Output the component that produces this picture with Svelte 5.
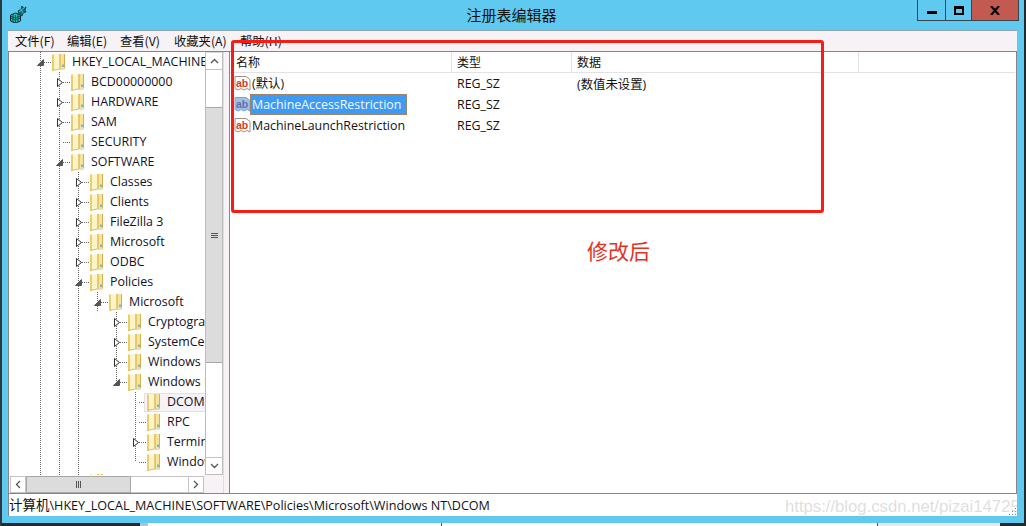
<script>
  const menus = ['文件(F)', '编辑(E)', '查看(V)', '收藏夹(A)', '帮助(H)'];
  const tree = [
    { d: 0, t: 'HKEY_LOCAL_MACHINE', e: 'o' },
    { d: 1, t: 'BCD00000000', e: 'c' },
    { d: 1, t: 'HARDWARE', e: 'c' },
    { d: 1, t: 'SAM', e: 'c' },
    { d: 1, t: 'SECURITY', e: '' },
    { d: 1, t: 'SOFTWARE', e: 'o' },
    { d: 2, t: 'Classes', e: 'c' },
    { d: 2, t: 'Clients', e: 'c' },
    { d: 2, t: 'FileZilla 3', e: 'c' },
    { d: 2, t: 'Microsoft', e: 'c' },
    { d: 2, t: 'ODBC', e: 'c' },
    { d: 2, t: 'Policies', e: 'o' },
    { d: 3, t: 'Microsoft', e: 'o' },
    { d: 4, t: 'Cryptography', e: 'c' },
    { d: 4, t: 'SystemCertificates', e: 'c' },
    { d: 4, t: 'Windows', e: 'c' },
    { d: 4, t: 'Windows NT', e: 'o' },
    { d: 5, t: 'DCOM', e: '', sel: true },
    { d: 5, t: 'RPC', e: '' },
    { d: 5, t: 'Terminal Services', e: 'c' },
    { d: 5, t: 'Windows', e: '' },
    { d: 2, t: '', e: '' }
  ];
  const values = [
    { n: '(默认)', t: 'REG_SZ', v: '(数值未设置)' },
    { n: 'MachineAccessRestriction', t: 'REG_SZ', v: '', sel: true },
    { n: 'MachineLaunchRestriction', t: 'REG_SZ', v: '' }
  ];
  const guides = [
    [31, 0, 423], [50, 20, 403], [69, 120, 303], [88, 240, 20], [107, 260, 70], [126, 340, 70]
  ];
  const lineX = (d) => 31 + 19 * d;
  const rowY = (i) => 10 + 20 * i;
</script>

<div class="window">
  <header class="titlebar">
    <svg class="appicon" viewBox="0 0 18 18" width="18" height="18">
      <path d="M.5 10l5-2 5 2v6l-5 2-5-2z" fill="#22c4bd" stroke="#06222a" stroke-width="1"/>
      <path d="M.5 13l5 2 5-2M5.500 10v8M3 9v8M8 9v8M.5 11l5 2 5-2" fill="none" stroke="#06222a" stroke-width=".7"/>
      <path d="M8 6l3-2 1-3 2 2 2-1-1 3 1 2-3 1-1 3-3-2z" fill="#0e6f80" stroke="#06222a" stroke-width=".7"/>
      <path d="M10 3l3 5M15 2l-6 5" stroke="#39c6cf" stroke-width="1"/>
    </svg>
    <div class="title">注册表编辑器</div>
    <div class="caption">
      <div class="cbtn min"><i></i></div>
      <div class="cbtn max"><i></i></div>
      <div class="cbtn close">
        <svg viewBox="0 0 10 9" width="10" height="9"><path d="M1 0l8 9M9 0l-8 9" fill="none" stroke="#000" stroke-width="2.200"/></svg>
      </div>
    </div>
  </header>

  <div class="client">
    <nav class="menubar">
      {#each menus as m}<span>{m}</span>{/each}
    </nav>
    <div class="panes">
      <section class="treepane">
        <div class="treeview">
          <svg class="lines" width="196" height="423">
            {#each guides as g}
              <line x1={g[0] + .5} x2={g[0] + .5} y1={g[1]} y2={g[1] + g[2]} />
            {/each}
            {#each tree as r, i}
              {#if r.t}<line x1={lineX(r.d) + 4} x2={lineX(r.d) + 12} y1={rowY(i) + .5} y2={rowY(i) + .5} />{/if}
            {/each}
          </svg>
          {#each tree as r}
            <div class="node" style="padding-left:{lineX(r.d) + 12}px">
              <span class="exp">
                {#if r.e === 'o'}
                  <svg width="7" height="7" viewBox="0 0 7 7"><path d="M6.500.5v6h-6z" fill="#555" stroke="#555"/></svg>
                {:else if r.e === 'c'}
                  <svg width="6" height="9" viewBox="0 0 6 9"><path d="M.5.5l5 4-5 4z" fill="#fff" stroke="#333"/></svg>
                {/if}
              </span>
              <div class="item" class:sel={r.sel}>
                <svg class="folder" viewBox="0 0 15 18" width="15" height="18">
                  <path d="M8 1h5.500v14H8z" fill="#f7e39a"/>
                  <path d="M13 1h1v14h-1z" fill="#d4b052"/>
                  <path d="M1 1.500h7.500V16L1 17.500z" fill="#fdf4c8"/>
                  <path d="M1 1.500h2v16H1z" fill="#eccd6e"/>
                  <path d="M8.500 1h1v15h-1z" fill="#cfa945"/>
                  <path d="M12 11.500v2.500" stroke="#3a9ad0" stroke-width="1.200"/>
                  <path d="M1 17.500l7.500-1.500h5v-.5" fill="none" stroke="#d9bd63"/>
                </svg>
                {#if r.t}<span class="label">{r.t}</span>{/if}
              </div>
            </div>
          {/each}
        </div>
        <div class="vscroll">
          <div class="sbtn">
            <svg width="9" height="6" viewBox="0 0 9 6"><path d="M1 5l3.500-3.500L8 5" fill="none" stroke="#555" stroke-width="1.300"/></svg>
          </div>
          <div class="vtrack">
            <div class="vthumb"><b></b><b></b><b></b></div>
          </div>
          <div class="sbtn">
            <svg width="9" height="6" viewBox="0 0 9 6"><path d="M1 1l3.500 3.500L8 1" fill="none" stroke="#555" stroke-width="1.300"/></svg>
          </div>
        </div>
        <div class="hscroll">
          <div class="sbtn h">
            <svg width="6" height="9" viewBox="0 0 6 9"><path d="M5 1L1.500 4.500 5 8" fill="none" stroke="#555" stroke-width="1.300"/></svg>
          </div>
          <div class="hthumb"><b></b><b></b><b></b></div>
          <div class="htrack"></div>
          <div class="sbtn h">
            <svg width="6" height="9" viewBox="0 0 6 9"><path d="M1 1l3.500 3.500L1 8" fill="none" stroke="#555" stroke-width="1.300"/></svg>
          </div>
        </div>
        <div class="corner"></div>
      </section>
      <section class="listpane">
        <div class="heads">
          <div class="head c1">名称</div>
          <div class="head c2">类型</div>
          <div class="head c3">数据</div>
        </div>
        {#each values as v}
          <div class="vrow">
            <div class="c1 namecell">
              <svg class="abicon" class:dim={v.sel} viewBox="0 0 17 17" width="17" height="17">
                <path class="paper" d="M1 1.500h11l4 3v10.500l-3-1.500-3 1.500-3-1.500-3 1.500-3-1.500z"/>
                <text x="2" y="11.500" class="ab">ab</text>
              </svg>
              <span class="vname" class:on={v.sel}>{v.n}</span>
            </div>
            <div class="c2 cell">{v.t}</div>
            <div class="c3 cell">{v.v}</div>
          </div>
        {/each}
      </section>
    </div>
    <footer class="status">
      <span class="root">计算机</span><span>\HKEY_LOCAL_MACHINE\SOFTWARE\Policies\Microsoft\Windows NT\DCOM</span>
      <svg class="grip" width="10" height="10" viewBox="0 0 10 10"><path d="M8 2h1v1H8zM8 5h1v1H8zM5 5h1v1H5zM8 8h1v1H8zM5 8h1v1H5zM2 8h1v1H2z" fill="#777"/></svg>
    </footer>
  </div>

  <div class="behind">
    <i class="b1"></i><i class="b2"></i><i class="b3"></i><i class="b4"></i><i class="b5"></i>
  </div>

  <div class="redbox"></div>
  <div class="note">修改后</div>
  <div class="mark">https://blog.csdn.net/pizai147258</div>
</div>

<style>
  :global(body) { margin: 0; background: #222; }
  .window {
    position: relative;
    width: 1026px; height: 526px; box-sizing: border-box; overflow: hidden;
    background: #5fc9f0;
    border-left: 2px solid #2b3a42; border-right: 2px solid #26282a;
    font-family: "Open Sans", "Noto Sans CJK SC", sans-serif; font-size: 12.4px; color: #111;
    display: flex; flex-direction: column;
  }
  .titlebar { height: 30px; flex: none; position: relative; display: flex; justify-content: center; }
  .appicon { position: absolute; left: 8px; top: 5px; }
  .title { font-family: "Noto Sans CJK SC", sans-serif; font-size: 15px; line-height: 30px; color: #111; padding-right: 3px; }
  .caption { position: absolute; top: 0; right: 5px; display: flex; height: 21px; border: solid #38454d; border-width: 0 1px 1px 1px; box-sizing: border-box; }
  .cbtn { display: flex; align-items: center; justify-content: center; height: 20px; }
  .min { width: 27px; border-right: 1px solid #38454d; }
  .min i { width: 10px; height: 3px; background: #000; margin-top: 4px; }
  .max { width: 25px; border-right: 1px solid #38454d; }
  .max i { width: 6px; height: 4px; border: 2px solid #000; border-top-width: 3px; }
  .close { width: 46px; background: #c35a52; }
  .client { margin: 0 7px 7px 6px; flex: 1; min-height: 0; display: flex; flex-direction: column; background: #f6f2f6; }
  .menubar { flex: none; display: flex; padding-left: 7px; line-height: 20px; font-size: 12.300px; border-top: 1px solid #8fa3ad; height: 20px; font-family: "Noto Sans CJK SC", sans-serif; }
  .menubar span:nth-child(1) { width: 52px; }
  .menubar span:nth-child(2) { width: 53px; }
  .menubar span:nth-child(3) { width: 54px; }
  .menubar span:nth-child(4) { width: 66px; }
  .panes { flex: 1; min-height: 0; display: flex; border-top: 1px solid #85858c; }
  .treepane {
    width: 214px; flex: none; display: grid; grid-template-columns: 196px 18px; grid-template-rows: 423px 18px;
    border-left: 1px solid #85858c; border-right: 1px solid #e0dce0; background: #fff;
  }
  .treeview { position: relative; overflow: hidden; background: #fff; height: 423px; }
  .lines { position: absolute; left: 0; top: 0; }
  .lines line { stroke: #666; stroke-width: 1; stroke-dasharray: 1 1; }
  .node { height: 20px; display: flex; align-items: center; position: relative; white-space: nowrap; }
  .exp { flex: none; width: 9px; height: 20px; display: flex; align-items: center; justify-content: center; margin-left: -16px; margin-right: 4px; }
  .item { flex: 1 0 auto; display: flex; align-items: center; height: 19px; padding-left: 3px; }
  .item.sel { background: #f6f2f6; outline: 1px solid #e6e0e6; outline-offset: -1px; }
  .folder { flex: none; margin-left: -1px; margin-right: 3px; }
  .label { flex: none; padding: 0 3px; line-height: 18px; color: #10102a; }
  .vscroll { display: flex; flex-direction: column; border: 1px solid #bdbdbd; border-top: 1px solid #d8d8d8; box-sizing: border-box; }
  .sbtn { height: 16px; flex: none; display: flex; align-items: center; justify-content: center; background: #fff; }
  .sbtn.h { width: 16px; height: auto; border: 1px solid #c4c4c4; box-sizing: border-box; }
  .vtrack { flex: 1; padding-top: 37px; border-top: 1px solid #c4c4c4; border-bottom: 1px solid #c4c4c4; display: flex; }
  .vthumb { flex: 1; height: 254px; background: #dcdcdc; border-top: 1px solid #a8a8a8; border-bottom: 1px solid #a8a8a8; display: flex; flex-direction: column; gap: 1px; align-items: center; justify-content: center; }
  .vthumb b { width: 7px; height: 1px; background: #555; }
  .hscroll { display: flex; background: #f6f2f6; padding: 0 1px; border-top: 1px solid #fff; grid-column: 1; }
  .hthumb { width: 105px; background: #dcdcdc; border: 1px solid #a8a8a8; box-sizing: border-box; display: flex; gap: 1px; align-items: center; justify-content: center; }
  .hthumb b { width: 1px; height: 7px; background: #555; }
  .htrack { flex: 1; background: #fff; border-block: 1px solid #c4c4c4; }
  .corner { background: #f6f2f6; }
  .listpane { flex: 1; margin-left: 5px; background: #fff; border-left: 1px solid #85858c; border-right: 1px solid #85858c; min-width: 0; }
  .heads { display: flex; height: 21px; border-bottom: 1px solid #e4e1e4; box-sizing: border-box; margin-right: 1px; }
  .head { border-right: 1px solid #e4e1e4; padding-left: 5px; line-height: 20px; box-sizing: border-box; font-family: "Noto Sans CJK SC", sans-serif; font-size: 12px; }
  .head.c1 { padding-left: 6px; }
  .c1 { width: 222px; flex: none; }
  .c2 { width: 120px; flex: none; }
  .c3 { width: 287px; flex: none; }
  .vrow { display: flex; height: 21px; align-items: center; }
  .namecell { display: flex; align-items: center; padding-left: 4px; box-sizing: border-box; }
  .abicon { flex: none; margin-right: -1px; }
  .paper { fill: #fff; stroke: #a58d87; }
  .ab { font-family: "Liberation Sans", sans-serif; font-weight: bold; font-size: 10.500px; fill: #d63a1c; }
  .dim .paper { fill: #9cc2ee; stroke: #7fa4d4; }
  .dim .ab { fill: #6d6aa6; }
  .vname { padding: 0 6px 0 2px; line-height: 21px; height: 21px; white-space: nowrap; }
  .vname.on { background: #3d9bf3; color: #f4f8ff; outline: 1px dotted rgba(200,120,50,.7); outline-offset: -1px; }
  .cell { padding-left: 5px; box-sizing: border-box; }
  .status { height: 23px; flex: none; line-height: 23px; font-size: 12.600px; background: #fff; border-top: 1px solid #85858c; border-left: 1px solid #85858c; position: relative; box-sizing: border-box; }
  .root { font-size: 13.500px; }
  .grip { position: absolute; right: 0; bottom: 0; }
  .behind { height: 3px; flex: none; display: flex; margin: 0 -2px; background: #26282a; }
  .behind i { display: block; height: 100%; }
  .b1 { width: 140px; }
  .b2 { width: 8px; background: #a9c4d2; }
  .b3 { width: 293px; background: #fff; border-right: 1px solid #555; }
  .b4 { width: 435px; background: #fff; border-right: 1px solid #555; }
  .b5 { width: 122px; background: #e8e8e8; }
  .redbox { position: absolute; left: 229px; top: 40px; width: 593px; height: 173px; box-sizing: border-box; border: 3px solid #f51d14; border-radius: 3px; pointer-events: none; }
  .note { position: absolute; left: 585px; top: 235px; font-family: "Noto Sans CJK SC", sans-serif; font-size: 21px; line-height: 30px; color: #e2321f; }
  .mark { position: absolute; left: 783px; top: 497px; width: 232px; overflow: hidden; white-space: nowrap; font-family: "Liberation Sans", sans-serif; font-size: 16.700px; line-height: 20px; color: rgba(190,190,190,.5); }
</style>
